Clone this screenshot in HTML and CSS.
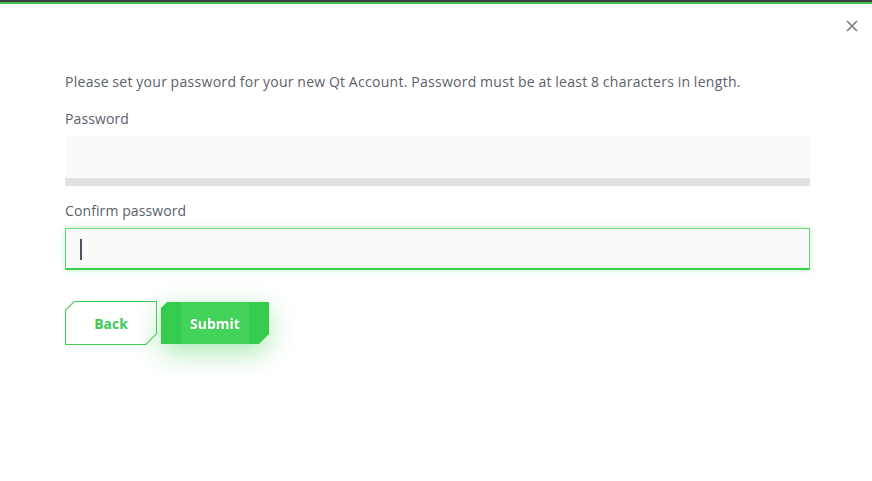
FILE: index.html
```html
<!DOCTYPE html>
<html>
<head>
<meta charset="utf-8">
<link rel="stylesheet" href="styles.css">
</head>
<body>
<div class="topbar"></div>
<div class="modal">
  <button class="close" aria-label="Close">
    <svg width="12" height="12" viewBox="0 0 12 12"><path d="M1 1 L11 11 M11 1 L1 11" stroke="#7a7a7a" stroke-width="1.6" fill="none"/></svg>
  </button>
  <div class="content">
    <p class="intro">Please set your password for your new Qt Account. Password must be at least 8 characters in length.</p>
    <label class="label">Password</label>
    <div class="field">
      <div class="input"></div>
      <div class="strength"></div>
    </div>
    <label class="label label2">Confirm password</label>
    <div class="input focused"><span class="caret"></span></div>
    <div class="actions">
      <button class="btn back"><span>Back</span></button>
      <div class="glow">
        <button class="btn submit"><span>Submit</span></button>
      </div>
    </div>
  </div>
</div>
</body>
</html>
```
FILE: styles.css
```css
html, body {
  margin: 0;
  padding: 0;
  background: #fff;
}
body {
  font-family: "Open Sans", "Noto Sans", sans-serif;
  color: #5b606b;
}
.topbar {
  height: 2px;
  background: #404040;
  border-bottom: 2px solid #41c14e;
}
.modal {
  position: relative;
  height: 477px;
}
.close {
  position: absolute;
  top: 16px;
  right: 14px;
  width: 12px;
  height: 12px;
  padding: 0;
  border: 0;
  background: none;
  display: flex;
}
.content {
  padding: 66px 62px 0 65px;
}
.intro {
  margin: 0;
  font-size: 14px;
  letter-spacing: 0.3px;
  word-spacing: -0.5px;
  line-height: 24px;
}
.label {
  display: block;
  font-size: 14px;
  letter-spacing: 0.1px;
  line-height: 20px;
  margin-top: 15px;
}
.field {
  margin-top: 7px;
}
.input {
  height: 42px;
  background: #fafafa;
  box-sizing: border-box;
}
.strength {
  height: 8px;
  background: #e2e2e2;
}
.label2 {
  margin-top: 15px;
}
.input.focused {
  margin-top: 7px;
  border: 1px solid #62d86d;
  border-bottom: 2px solid #3ccf4e;
  box-shadow: 0 0 6px rgba(70, 215, 85, 0.35);
  display: flex;
  align-items: center;
  padding-left: 14px;
}
.caret {
  width: 2px;
  height: 21px;
  background: #4e5060;
  margin-top: 1px;
}
.actions {
  display: flex;
  gap: 4px;
  margin-top: 31px;
  align-items: flex-start;
}
.btn {
  position: relative;
  border: 0;
  padding: 0;
  font-family: "Open Sans", "Noto Sans", sans-serif;
  font-weight: 700;
  font-size: 14px;
  letter-spacing: 0px;
  cursor: pointer;
  display: flex;
  align-items: center;
  justify-content: center;
}
.btn span {
  position: relative;
  z-index: 1;
}
.back {
  width: 92px;
  height: 44px;
  background: #3ccf4e;
  color: #41c953;
  clip-path: polygon(9px 0, 100% 0, 100% calc(100% - 11px), calc(100% - 11px) 100%, 0 100%, 0 9px);
}
.back::before {
  content: "";
  position: absolute;
  inset: 1px;
  background: #fff;
  clip-path: polygon(8.5px 0, 100% 0, 100% calc(100% - 10.5px), calc(100% - 10.5px) 100%, 0 100%, 0 8.5px);
}
.glow {
  margin-top: 1px;
  filter: drop-shadow(0 8px 14px rgba(60, 205, 80, 0.45));
}
.submit {
  width: 108px;
  height: 42px;
  background: #35cb4e;
  color: #fff;
  clip-path: polygon(6px 0, 100% 0, 100% calc(100% - 10px), calc(100% - 10px) 100%, 0 100%, 0 6px);
}
.submit::before {
  content: "";
  position: absolute;
  left: 20px;
  right: 20px;
  top: 0;
  bottom: 0;
  background: #43d25a;
}
```
